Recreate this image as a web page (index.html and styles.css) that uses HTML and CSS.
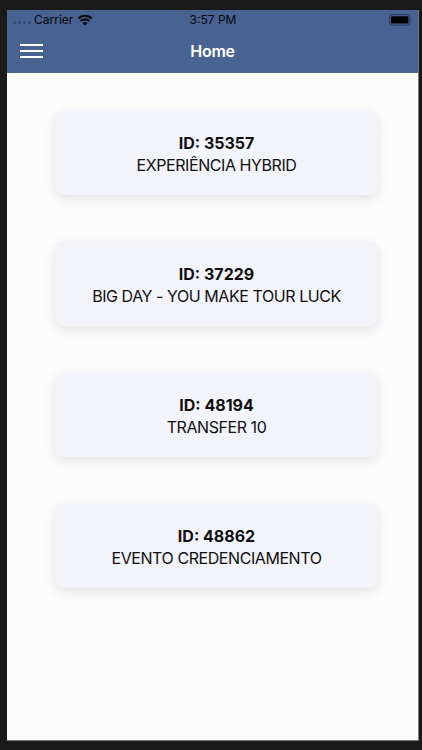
FILE: index.html
```html
<!DOCTYPE html>
<html lang="pt-BR">
<head>
    <meta charset="UTF-8">
    <meta name="viewport" content="width=device-width, initial-scale=1.0">
    <title>Home</title>
    <link rel="stylesheet" href="styles.css">
</head>
<body>
    <div class="screen">
        <header class="header">
            <div class="status-bar">
                <div class="carrier">
                    <span class="signal"><i></i><i></i><i></i><i></i></span>
                    <span class="carrier-name">Carrier</span>
                    <svg class="wifi" viewBox="0 0 16 12" width="16" height="12">
                        <g fill="none" stroke="#05070b" stroke-width="2.1">
                            <path d="M1.2 4.6A9.6 9.6 0 0 1 14.8 4.6"/>
                            <path d="M3.7 7.1A6.1 6.1 0 0 1 12.3 7.1"/>
                        </g>
                        <path d="M8 11.6L5.5 9.1A3.6 3.6 0 0 1 10.5 9.1Z" fill="#05070b"/>
                    </svg>
                </div>
                <span class="time">3:57 PM</span>
                <svg class="battery" viewBox="0 0 24 12" width="24" height="12">
                    <rect x="0.5" y="0.7" width="20.4" height="10.4" rx="2.6" fill="none" stroke="#2b3b59"/>
                    <rect x="2" y="2.2" width="17.4" height="7.4" rx="1.2" fill="#000"/>
                    <path d="M22.2 4.2Q23.6 5.9 22.2 7.6Z" fill="#2b3b59"/>
                </svg>
            </div>
            <nav class="nav-bar">
                <button class="menu-btn" aria-label="Menu">
                    <span></span>
                    <span></span>
                    <span></span>
                </button>
                <h1>Home</h1>
            </nav>
        </header>

        <main class="event-list">
            <div class="card">
                <strong>ID: 35357</strong>
                <p>EXPERIÊNCIA HYBRID</p>
            </div>
            <div class="card">
                <strong>ID: 37229</strong>
                <p>BIG DAY - YOU MAKE TOUR LUCK</p>
            </div>
            <div class="card">
                <strong>ID: 48194</strong>
                <p>TRANSFER 10</p>
            </div>
            <div class="card">
                <strong>ID: 48862</strong>
                <p>EVENTO CREDENCIAMENTO</p>
            </div>
        </main>
    </div>
</body>
</html>
```

FILE: styles.css
```css
:root {
    --primary: #486291;
    --frame: #1a1a1a;
    --bg: #fcfcfc;
    --card: #f3f4f9;
    --text: #101012;
}

* {
    box-sizing: border-box;
    margin: 0;
    padding: 0;
}

body {
    font-family: Inter, sans-serif;
    color: var(--text);
    background-color: var(--frame);
    height: 750px;
    padding: 10px 3px 9px 7px;
    overflow: hidden;
}

.screen {
    height: 731px;
    background-color: var(--bg);
    border-right: 1px solid #77797c;
    border-bottom: 1px solid #77797c;
}

.header {
    height: 63px;
    background-color: var(--primary);
}

.status-bar {
    display: grid;
    grid-template-columns: 1fr auto 1fr;
    align-items: center;
    height: 19px;
    padding: 0 5px 0 6px;
    font-size: 12px;
    color: #05070b;
}

.carrier {
    display: flex;
    align-items: center;
}

.signal {
    display: flex;
    gap: 2px;
    margin: 6px 3px 0 0;
}

.signal i {
    width: 3px;
    height: 3px;
    border-radius: 50%;
    background-color: #364b73;
}

.wifi {
    margin-left: 4px;
}

.battery {
    justify-self: end;
}

.nav-bar {
    display: grid;
    grid-template-columns: 1fr auto 1fr;
    align-items: center;
    height: 44px;
    padding: 0 13px;
}

.menu-btn {
    display: flex;
    flex-direction: column;
    gap: 4px;
    width: 23px;
    border: none;
    background: none;
}

.menu-btn span {
    height: 2px;
    background-color: #fff;
}

h1 {
    font-size: 16px;
    font-weight: 600;
    letter-spacing: -0.3px;
    color: #fff;
}

.event-list {
    display: flex;
    flex-direction: column;
    gap: 46px;
    padding: 37px 40px 0 48px;
}

.card {
    height: 85px;
    padding-top: 22px;
    border-radius: 9px;
    background-color: var(--card);
    box-shadow: 0 4px 12px rgba(0, 0, 0, 0.1);
    font-size: 16px;
    line-height: 22px;
    text-align: center;
}

.card strong {
    display: block;
    font-weight: 700;
}

.card p {
    letter-spacing: -0.43px;
}
```
